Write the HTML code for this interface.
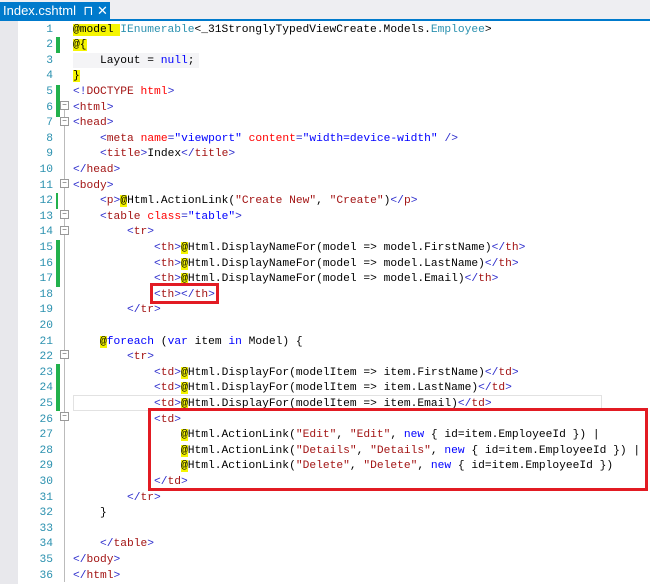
<!DOCTYPE html>
<html><head><style>
body{margin:0;width:650px;height:584px;background:#fff;position:relative;overflow:hidden;font-family:"Liberation Mono",monospace;font-size:11.25px}
.top{position:absolute;left:0;top:0;width:650px;height:19px;background:#eeeef2;border-bottom:2px solid #007acc}
.tab{position:absolute;left:0;top:2px;width:110px;height:19px;background:#007acc;color:#fff;font-family:"Liberation Sans",sans-serif;font-size:13px;line-height:18px;padding-left:3px;box-sizing:border-box}
.strip{position:absolute;left:0;top:21px;width:18px;height:563px;background:#e8e8ec}
.ln{position:absolute;left:18px;width:35px;text-align:right;color:#2b91af;height:15.6px;line-height:15.6px}
.code{position:absolute;left:73px;white-space:pre;color:#000;height:15.6px;line-height:15.6px}
.g{position:absolute;left:56px;width:4px;background:#22b14c}
.d{color:#2c2ccc}.t{color:#a31515}.a{color:#f00}.v{color:#00f}.k{color:#00f}.s{color:#a31515}.ty{color:#2b91af}
.y{background:#f5f500}
.box{position:absolute;border:3px solid #e21b23}
.fold{position:absolute;left:60px;width:7px;height:7px;border:1px solid #999;background:#fff;font-size:8px;line-height:7px;text-align:center;color:#555}
.vl{position:absolute;left:64px;width:1px;background:#bbb}
</style></head><body>
<div class="top"></div><div class="tab">Index.cshtml &nbsp;⊓ ✕</div>
<div class="strip"></div>
<div class="g" style="top:85px;height:32px"></div>
<div class="g" style="top:37px;height:16px"></div>
<div class="g" style="top:193px;height:16px;width:2px"></div>
<div class="g" style="top:240px;height:47px"></div>
<div class="g" style="top:364px;height:47px"></div>
<div class="vl" style="top:107px;height:475px"></div>
<div style="position:absolute;left:73px;top:53px;width:126px;height:15px;background:#f4f4f6"></div>
<div style="position:absolute;left:73px;top:395px;width:527px;height:14px;border:1px solid #e2e2e2"></div>
<div class="fold" style="top:101px">−</div>
<div class="fold" style="top:117px">−</div>
<div class="fold" style="top:179px">−</div>
<div class="fold" style="top:210px">−</div>
<div class="fold" style="top:226px">−</div>
<div class="fold" style="top:350px">−</div>
<div class="fold" style="top:412px">−</div>
<div id="c"></div>
<script>
var L=[
'<span class="y">@model </span><span class="ty">IEnumerable</span>&lt;_31StronglyTypedViewCreate.Models.<span class="ty">Employee</span>&gt;',
'<span class="y">@{</span>',
'    Layout = <span class="k">null</span>;',
'<span class="y">}</span>',
'<span class="d">&lt;!</span><span class="t">DOCTYPE</span> <span class="a">html</span><span class="d">&gt;</span>',
'<span class="d">&lt;</span><span class="t">html</span><span class="d">&gt;</span>',
'<span class="d">&lt;</span><span class="t">head</span><span class="d">&gt;</span>',
'    <span class="d">&lt;</span><span class="t">meta</span> <span class="a">name</span><span class="d">=</span><span class="v">"viewport"</span> <span class="a">content</span><span class="d">=</span><span class="v">"width=device-width"</span> <span class="d">/&gt;</span>',
'    <span class="d">&lt;</span><span class="t">title</span><span class="d">&gt;</span>Index<span class="d">&lt;/</span><span class="t">title</span><span class="d">&gt;</span>',
'<span class="d">&lt;/</span><span class="t">head</span><span class="d">&gt;</span>',
'<span class="d">&lt;</span><span class="t">body</span><span class="d">&gt;</span>',
'    <span class="d">&lt;</span><span class="t">p</span><span class="d">&gt;</span><span class="y">@</span>Html.ActionLink(<span class="s">"Create New"</span>, <span class="s">"Create"</span>)<span class="d">&lt;/</span><span class="t">p</span><span class="d">&gt;</span>',
'    <span class="d">&lt;</span><span class="t">table</span> <span class="a">class</span><span class="d">=</span><span class="v">"table"</span><span class="d">&gt;</span>',
'        <span class="d">&lt;</span><span class="t">tr</span><span class="d">&gt;</span>',
'            <span class="d">&lt;</span><span class="t">th</span><span class="d">&gt;</span><span class="y">@</span>Html.DisplayNameFor(model =&gt; model.FirstName)<span class="d">&lt;/</span><span class="t">th</span><span class="d">&gt;</span>',
'            <span class="d">&lt;</span><span class="t">th</span><span class="d">&gt;</span><span class="y">@</span>Html.DisplayNameFor(model =&gt; model.LastName)<span class="d">&lt;/</span><span class="t">th</span><span class="d">&gt;</span>',
'            <span class="d">&lt;</span><span class="t">th</span><span class="d">&gt;</span><span class="y">@</span>Html.DisplayNameFor(model =&gt; model.Email)<span class="d">&lt;/</span><span class="t">th</span><span class="d">&gt;</span>',
'            <span class="d">&lt;</span><span class="t">th</span><span class="d">&gt;&lt;/</span><span class="t">th</span><span class="d">&gt;</span>',
'        <span class="d">&lt;/</span><span class="t">tr</span><span class="d">&gt;</span>',
'',
'    <span class="y">@</span><span class="k">foreach</span> (<span class="k">var</span> item <span class="k">in</span> Model) {',
'        <span class="d">&lt;</span><span class="t">tr</span><span class="d">&gt;</span>',
'            <span class="d">&lt;</span><span class="t">td</span><span class="d">&gt;</span><span class="y">@</span>Html.DisplayFor(modelItem =&gt; item.FirstName)<span class="d">&lt;/</span><span class="t">td</span><span class="d">&gt;</span>',
'            <span class="d">&lt;</span><span class="t">td</span><span class="d">&gt;</span><span class="y">@</span>Html.DisplayFor(modelItem =&gt; item.LastName)<span class="d">&lt;/</span><span class="t">td</span><span class="d">&gt;</span>',
'            <span class="d">&lt;</span><span class="t">td</span><span class="d">&gt;</span><span class="y">@</span>Html.DisplayFor(modelItem =&gt; item.Email)<span class="d">&lt;/</span><span class="t">td</span><span class="d">&gt;</span>',
'            <span class="d">&lt;</span><span class="t">td</span><span class="d">&gt;</span>',
'                <span class="y">@</span>Html.ActionLink(<span class="s">"Edit"</span>, <span class="s">"Edit"</span>, <span class="k">new</span> { id=item.EmployeeId }) |',
'                <span class="y">@</span>Html.ActionLink(<span class="s">"Details"</span>, <span class="s">"Details"</span>, <span class="k">new</span> { id=item.EmployeeId }) |',
'                <span class="y">@</span>Html.ActionLink(<span class="s">"Delete"</span>, <span class="s">"Delete"</span>, <span class="k">new</span> { id=item.EmployeeId })',
'            <span class="d">&lt;/</span><span class="t">td</span><span class="d">&gt;</span>',
'        <span class="d">&lt;/</span><span class="t">tr</span><span class="d">&gt;</span>',
'    }',
'',
'    <span class="d">&lt;/</span><span class="t">table</span><span class="d">&gt;</span>',
'<span class="d">&lt;/</span><span class="t">body</span><span class="d">&gt;</span>',
'<span class="d">&lt;/</span><span class="t">html</span><span class="d">&gt;</span>'];
var h='';for(var i=0;i<L.length;i++){var t=22.5+i*15.6;h+='<div class="ln" style="top:'+t+'px">'+(i+1)+'</div><div class="code" style="top:'+t+'px">'+L[i]+'</div>';}
document.getElementById('c').innerHTML=h;
</script>
<div class="box" style="left:150px;top:283px;width:63px;height:15px"></div>
<div class="box" style="left:148px;top:408px;width:494px;height:77px"></div>
</body></html>
